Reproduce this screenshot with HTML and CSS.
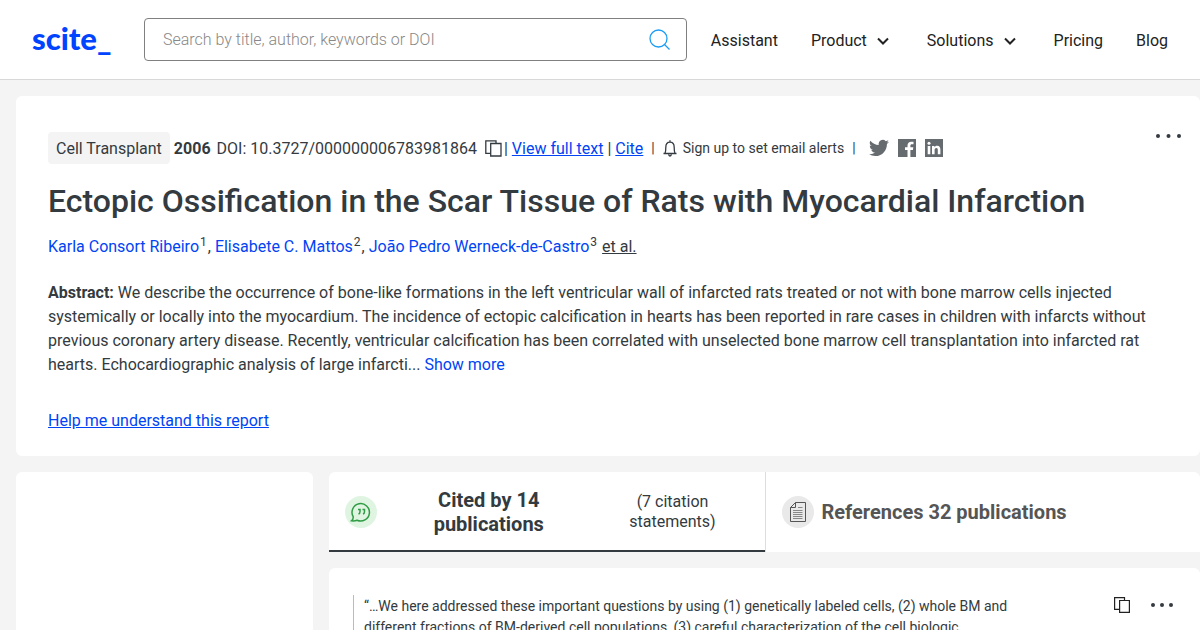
FILE: index.html
```html
<!DOCTYPE html>
<html lang="en">
<head>
<meta charset="utf-8">
<title>Ectopic Ossification in the Scar Tissue of Rats with Myocardial Infarction - scite</title>
<link rel="stylesheet" href="styles.css">
</head>
<body>
<header class="header">
  <a class="logo" href="#">scite_</a>
  <form class="search">
    <input class="search-input" type="search" placeholder="Search by title, author, keywords or DOI" aria-label="Search by title, author, keywords or DOI">
    <button class="icon-button" type="button" aria-label="Search">
      <svg width="22" height="22" viewBox="0 0 22 22" fill="none" stroke="#1a9cf5" stroke-width="1.3"><circle cx="9.5" cy="9.5" r="8.5"/><path d="M15.5 15.5L20.500 20.500"/></svg>
    </button>
  </form>
  <nav class="nav">
    <a href="#">Assistant</a>
    <button class="nav-menu" type="button">Product <svg width="12" height="8" viewBox="0 0 12 8" fill="none" stroke="#222" stroke-width="2"><path d="M1 1.5L6 6.5L11 1.5"/></svg></button>
    <button class="nav-menu" type="button">Solutions <svg width="12" height="8" viewBox="0 0 12 8" fill="none" stroke="#222" stroke-width="2"><path d="M1 1.5L6 6.5L11 1.5"/></svg></button>
    <a href="#">Pricing</a>
    <a href="#">Blog</a>
  </nav>
</header>
<main class="page">
  <section class="card paper">
    <div class="paper-top">
      <div class="meta">
        <span class="journal">Cell Transplant</span>
        <strong>2006</strong>
        <span class="doi">DOI: 10.3727/000000006783981864</span>
        <span class="meta-links">
          <button class="icon-button" type="button" aria-label="Copy DOI"><svg width="17" height="17" viewBox="0 0 17 17" fill="none" stroke="#333a40" stroke-width="1.3"><path d="M5.5 13.3H.8V.8H11V3"/><path d="M5.7 3.5H16V16H5.7z"/></svg></button>
          <span>|</span>
        </span>
        <a href="#">View full text</a>
        <span>|</span>
        <a href="#">Cite</a>
        <span class="bar">|</span>
        <button class="alerts" type="button"><svg width="14" height="17" viewBox="0 0 14 17" fill="none" stroke="#333a40" stroke-width="1.3"><path d="M.5 13.5H13.5M2 13.3C2.8 12 2.8 10 2.8 7.5C2.8 4.5 4.4 2.2 7 2.2S11.200 4.500 11.200 7.500C11.200 10 11.200 12 12 13.300M7 .3V2M5.500 14.500Q7 17.500 8.500 14.500"/></svg>Sign up to set email alerts</button>
        <span class="bar">|</span>
        <span class="social">
          <a href="#" aria-label="Twitter"><svg width="20" height="20" viewBox="0 0 24 24" fill="#666b70"><path d="M23.950 4.600a10 10 0 0 1-2.800.8 4.900 4.900 0 0 0 2.100-2.700c-.9.600-2 1-3.100 1.200a4.900 4.900 0 0 0-8.400 4.500C7.700 8.200 4.100 6.200 1.700 3.200a4.900 4.900 0 0 0 1.500 6.500 4.900 4.900 0 0 1-2.200-.6v.1a4.900 4.900 0 0 0 3.900 4.800 5 5 0 0 1-2.200.1 4.900 4.900 0 0 0 4.600 3.400A9.900 9.900 0 0 1 0 19.500 14 14 0 0 0 7.500 21.700c9.100 0 14-7.500 14-14v-.6a10 10 0 0 0 2.450-2.500z"/></svg></a>
          <a href="#" aria-label="Facebook"><svg width="18" height="18" viewBox="0 0 18 18"><path fill="#666b70" d="M0 0H18V18H0z"/><path fill="#fff" d="M9.500 18V11H7V8.300H9.500V6.500C9.500 4 11 2.700 13.200 2.700H15.500V5.200H14C12.700 5.200 12.400 5.800 12.400 6.700V8.300H15.300L14.900 11H12.400V18z"/></svg></a>
          <a href="#" aria-label="LinkedIn"><svg width="18" height="18" viewBox="0 0 18 18"><path fill="#666b70" d="M0 0H18V18H0z"/><path fill="#fff" d="M2.700 7H5.300V15.300H2.700zM7 7H9.400V8.200C10 7.200 11 6.700 12.200 6.700C14.700 6.700 15.400 8.400 15.400 10.700V15.300H12.800V11.200C12.800 10 12.700 9 11.400 9C10 9 9.600 10 9.600 11.200V15.300H7z"/><circle fill="#fff" cx="4" cy="4.200" r="1.500"/></svg></a>
        </span>
      </div>
      <button class="icon-button more" type="button" aria-label="More options"><svg width="25" height="4" viewBox="0 0 25 4" fill="#333a40"><circle cx="2" cy="2" r="2"/><circle cx="12.500" cy="2" r="2"/><circle cx="23" cy="2" r="2"/></svg></button>
    </div>
    <h1>Ectopic Ossification in the Scar Tissue of Rats with Myocardial Infarction</h1>
    <p class="authors"><a href="#">Karla Consort Ribeiro</a><sup>1</sup>, <a href="#">Elisabete C. Mattos</a><sup>2</sup>, <a href="#">João Pedro Werneck-de-Castro</a><sup>3</sup> <button class="et-al" type="button">et al.</button></p>
    <p class="abstract"><strong>Abstract:</strong> We describe the occurrence of bone-like formations in the left ventricular wall of infarcted rats treated or not with bone marrow cells injected<br>systemically or locally into the myocardium. The incidence of ectopic calcification in hearts has been reported in rare cases in children with infarcts without<br>previous coronary artery disease. Recently, ventricular calcification has been correlated with unselected bone marrow cell transplantation into infarcted rat<br>hearts. Echocardiographic analysis of large infarcti... <a href="#">Show more</a></p>
    <a class="help" href="#">Help me understand this report</a>
  </section>
  <div class="columns">
    <aside class="card"></aside>
    <div class="results">
      <div class="card tabs">
        <button class="tab active" type="button">
          <span class="badge green"><svg width="22" height="20" viewBox="0 0 22 20" fill="none" stroke="#309b45" stroke-width="1.500"><path d="M3.200 14.700A8.700 8.700 0 1 1 7 18.200Q4.500 19.300 1.500 18.800Q3.400 17.200 3.200 14.700z"/><path d="M8 7.500H10V9.500Q10 11.500 8.500 12M12.500 7.500H14.500V9.500Q14.500 11.500 13 12"/></svg></span>
          <span class="tab-title">Cited by 14 publications</span>
          <span class="tab-note">(7 citation statements)</span>
        </button>
        <button class="tab" type="button">
          <span class="badge"><svg width="16" height="20" viewBox="0 0 16 20" fill="none" stroke="#555"><path d="M5.500.5H15.500V19.500H.5V5.500zM5.500.5V5.500H.5"/><path stroke="#888" d="M8 5.500H12.500M3 8.500H12.500M3 10.500H12.500M3 12.500H12.500M3 14.500H12.500M3 16.500H12.500"/></svg></span>
          <span class="tab-title">References 32 publications</span>
        </button>
      </div>
      <article class="card citation">
        <blockquote>“…We here addressed these important questions by using (1) genetically labeled cells, (2) whole BM and<br>different fractions of BM-derived cell populations, (3) careful characterization of the cell biologic</blockquote>
        <div class="actions">
          <button class="icon-button" type="button" aria-label="Copy citation"><svg width="16" height="16" viewBox="0 0 16 16" fill="none" stroke="#222" stroke-width="1.200"><path d="M5 12.300H.6V.6H10.500V3"/><path d="M5.600 3.500H15.400V15.400H5.600z"/></svg></button>
          <button class="icon-button" type="button" aria-label="More options"><svg width="22" height="4" viewBox="0 0 22 4" fill="#333a40"><circle cx="2" cy="2" r="2"/><circle cx="11" cy="2" r="2"/><circle cx="20" cy="2" r="2"/></svg></button>
        </div>
      </article>
    </div>
  </div>
</main>
</body>
</html>
```
FILE: styles.css
```css
* { box-sizing: border-box; }
body {
  margin: 0;
  background: #f4f4f4;
  color: #333a40;
  font: 16px/24px Roboto, "Liberation Sans", sans-serif;
  overflow: hidden;
}
button { border: 0; padding: 0; background: none; color: inherit; font: inherit; cursor: pointer; }
svg { display: block; flex: none; }
a { color: #0044f5; }
h1, p, blockquote { margin: 0; }
.icon-button { display: flex; }
.header {
  display: flex;
  align-items: center;
  height: 80px;
  padding: 0 32px;
  background: #fff;
  border-bottom: 1px solid #d8d8d8;
}
.logo { flex: 0 0 112px; padding-bottom: 4px; color: #0044ff; font: 900 31px/32px Lato, sans-serif; text-decoration: none; }
.search {
  display: flex;
  flex: 1;
  align-items: center;
  height: 43px;
  margin-right: 24px;
  padding: 0 15px 0 18px;
  border: 1px solid #808080;
  border-radius: 4px;
}
.search-input { flex: 1; min-width: 0; padding: 0; border: 0; outline: 0; background: none; color: #333; font: inherit; font-weight: 300; }
.search-input::placeholder { color: #888; }
.nav { display: flex; gap: 33px; padding-top: 2px; }
.nav a { color: #222; text-decoration: none; }
.nav-menu { display: flex; align-items: center; gap: 10px; padding-right: 5px; color: #222; }
.page { padding: 16px 0 0 16px; }
.card { background: #fff; border-radius: 6px; }
.paper { padding: 36px 16px 23px 32px; }
.paper-top { display: flex; justify-content: space-between; }
.more { height: 8px; padding: 2px 3px; }
.meta { display: flex; align-items: center; gap: 4px; height: 32px; }
.journal { padding: 5px 8px 3px; border-radius: 4px; background: #f4f4f4; }
.meta strong, .doi, .meta-links span, .meta > a, .meta > span:not(.journal, .social, .bar) { padding-top: 1px; }
.doi { padding-left: 2px; }
.meta-links { display: flex; align-items: center; gap: 2px; padding-left: 4px; }
.bar { padding: 0 4px; font-size: 14px; }
.alerts { display: flex; align-items: center; gap: 6px; font-size: 14px; }
.social { display: flex; align-items: center; gap: 9px; padding-left: 5px; }
h1 { margin-top: 16px; font-size: 32px; line-height: 42px; font-weight: 500; }
.authors { margin-top: 13px; }
.authors a, .abstract a { text-decoration: none; }
sup { font-size: 12px; line-height: 0; padding: 0 1px; }
.et-al { text-decoration: underline; }
.abstract { margin-top: 22px; white-space: nowrap; }
.help { display: inline-block; margin-top: 32px; }
.columns { display: grid; grid-template-columns: 297px 1fr; gap: 16px; margin-top: 16px; }
.results { display: flex; flex-direction: column; gap: 16px; }
.tabs { display: grid; grid-template-columns: 1fr 1fr; min-height: 80px; border-radius: 6px 6px 0 0; }
.tab { display: flex; align-items: center; gap: 8px; padding: 0 16px; border-left: 1px solid #ddd; color: #555; }
.tab.active { padding-top: 2px; border-left: 0; border-bottom: 2px solid #333a40; color: #333a40; }
.badge { display: flex; flex: none; align-items: center; justify-content: center; width: 32px; height: 32px; border-radius: 50%; background: #e9e9e9; }
.green { background: #dff5e2; }
.tab-title { font-size: 20px; font-weight: 700; }
.active .tab-title { flex: 1; padding: 0 48px 0 36px; }
.tab-note { width: 120px; margin-right: 16px; line-height: 20px; }
.citation { display: flex; justify-content: space-between; padding: 27px 27px 24px 24px; }
blockquote { padding: 1px 0 0 10px; border-left: 1px solid #bbb; font-size: 14px; line-height: 21px; }
.actions { display: flex; align-items: center; gap: 21px; height: 20px; }
```
